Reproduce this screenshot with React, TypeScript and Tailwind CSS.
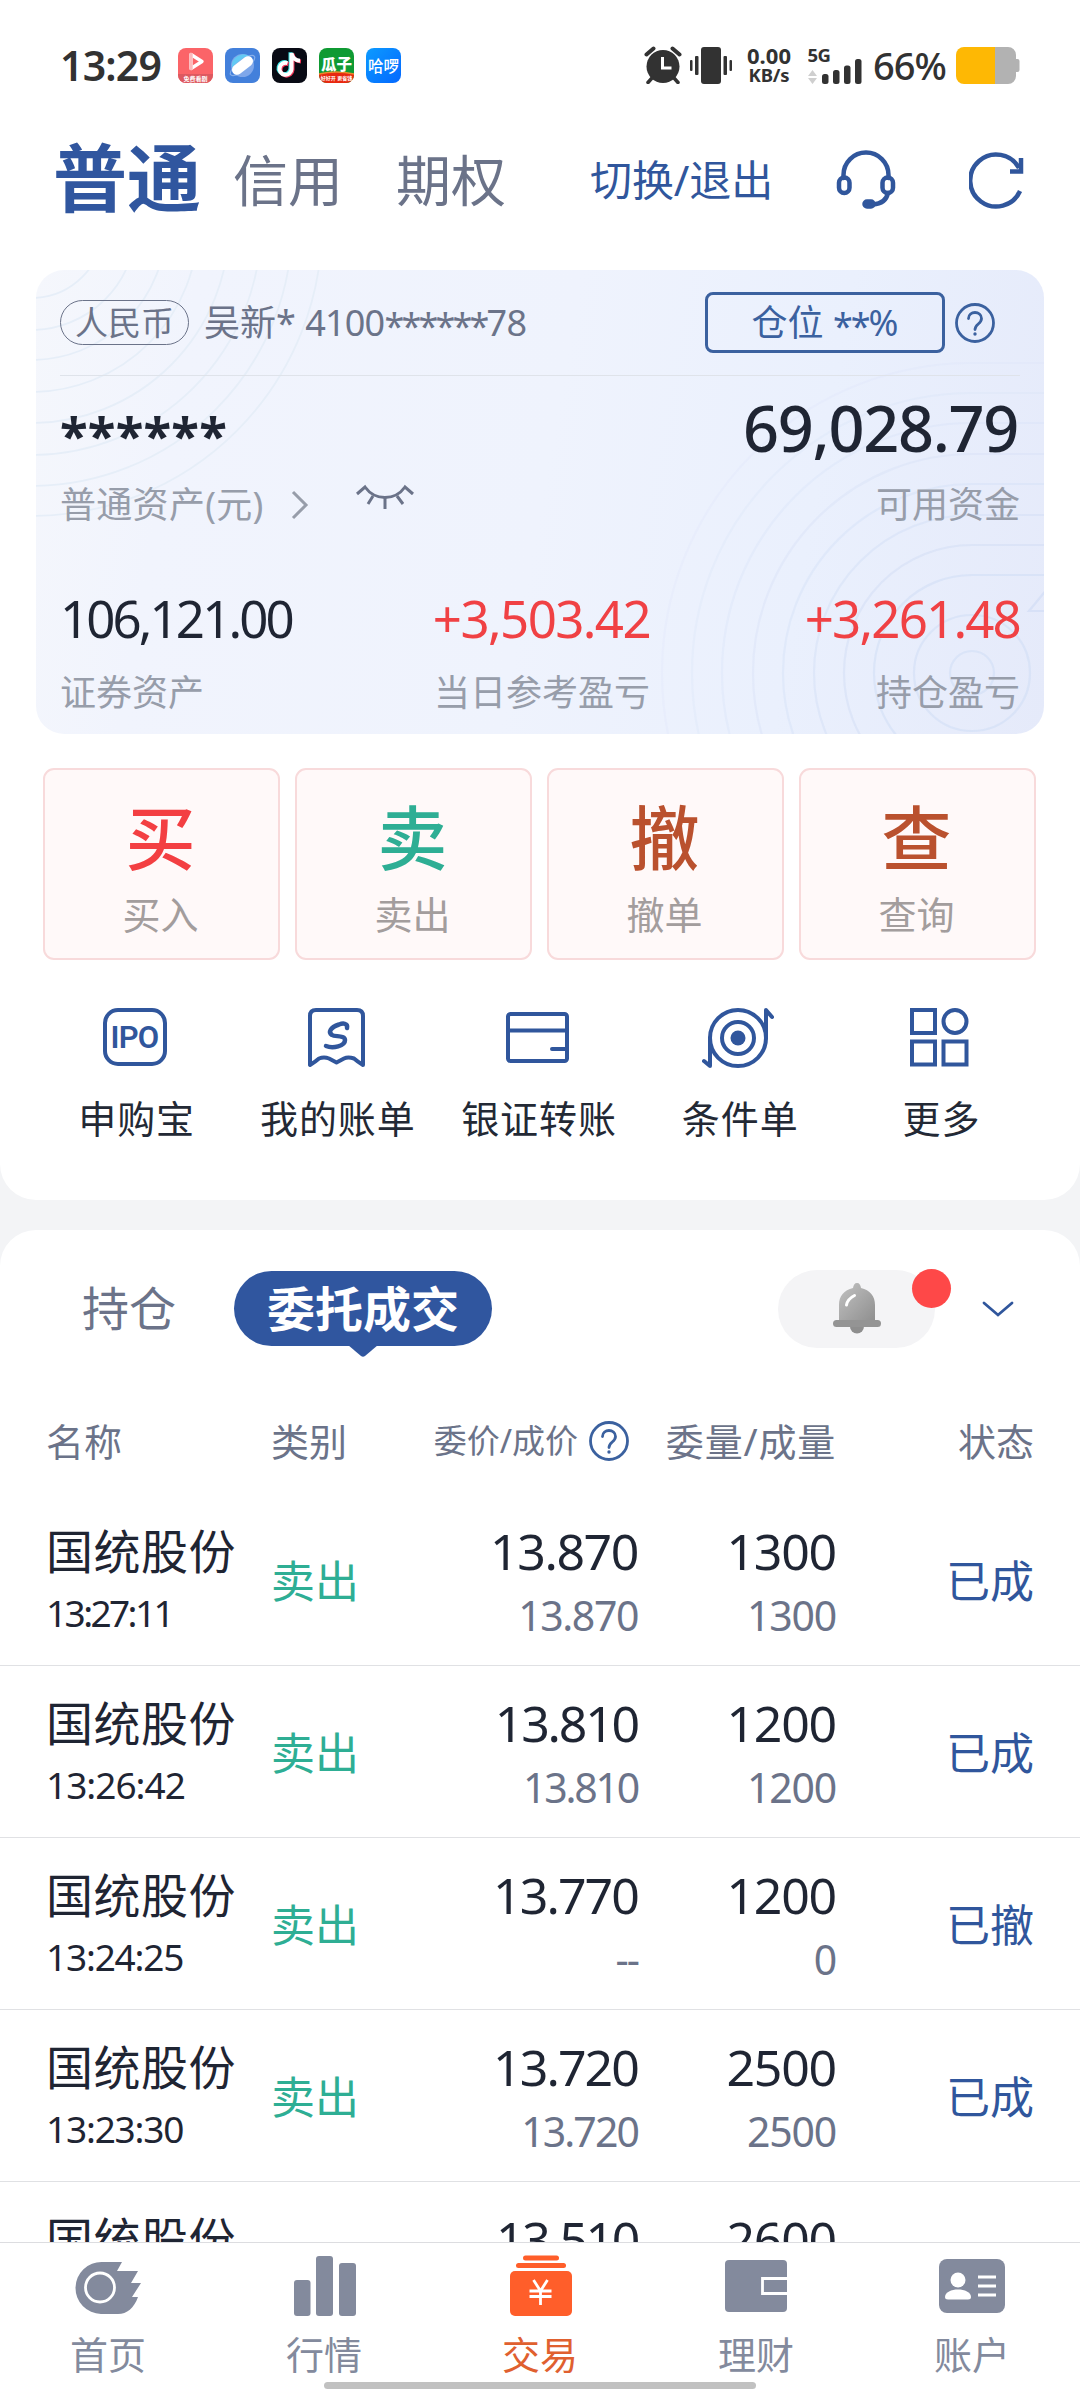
import type { ReactNode } from "react";
import clsx from "clsx";

type Order = {
  name: string;
  time: string;
  timeClass: string;
  price: string;
  dealPrice: string;
  priceClass: string;
  amount: string;
  dealAmount: string;
  status: string;
};

const orders: Order[] = [
  { name: "国统股份", time: "13:27:11", timeClass: "tracking-[-2.6px]", price: "13.870", dealPrice: "13.870", priceClass: "tracking-[-1.4px]", amount: "1300", dealAmount: "1300", status: "已成" },
  { name: "国统股份", time: "13:26:42", timeClass: "tracking-[-1px]", price: "13.810", dealPrice: "13.810", priceClass: "tracking-[-2.2px]", amount: "1200", dealAmount: "1200", status: "已成" },
  { name: "国统股份", time: "13:24:25", timeClass: "tracking-[-1.2px]", price: "13.770", dealPrice: "--", priceClass: "tracking-[-1.9px]", amount: "1200", dealAmount: "0", status: "已撤" },
  { name: "国统股份", time: "13:23:30", timeClass: "tracking-[-1.2px]", price: "13.720", dealPrice: "13.720", priceClass: "tracking-[-1.9px]", amount: "2500", dealAmount: "2500", status: "已成" },
  { name: "国统股份", time: "13:22:08", timeClass: "tracking-[-1.2px]", price: "13.510", dealPrice: "13.510", priceClass: "tracking-[-2.4px]", amount: "2600", dealAmount: "2600", status: "已成" },
];

const actions = [
  { big: "买", label: "买入", color: "text-[#f33f42]" },
  { big: "卖", label: "卖出", color: "text-[#2eae94]" },
  { big: "撤", label: "撤单", color: "text-[#ba512e]" },
  { big: "查", label: "查询", color: "text-[#ba512e]" },
];

/* ---------- status bar ---------- */

const AppBadges = () => (
  <div className="ml-[17px] flex gap-[12px]">
    <svg width="35" height="35" viewBox="0 0 35 35">
      <rect width="35" height="35" rx="8" fill="#fb6468" />
      <path d="M0 26h35v1a8 8 0 0 1-8 8H8a8 8 0 0 1-8-8z" fill="#dd5960" />
      <path d="M13 6.5v14l11-7z" fill="none" stroke="#fff" strokeWidth="3.4" strokeLinejoin="round" />
      <path d="M13 6.5v14" stroke="#fdb9bb" strokeWidth="3.4" strokeLinecap="round" />
      <text x="17.5" y="32.5" fontSize="6" fontWeight="700" textAnchor="middle" fill="#fff">免费看剧</text>
    </svg>
    <svg width="35" height="35" viewBox="0 0 35 35">
      <rect width="35" height="35" rx="8" fill="#4380db" />
      <circle cx="17.500" cy="17.500" r="11.500" fill="#7fa7ea" />
      <path d="M7 20A11.500 11.500 0 0 1 26 9.500z" fill="#63c9f3" />
      <ellipse cx="17.500" cy="17.500" rx="15" ry="5" transform="rotate(-38 17.500 17.500)" fill="none" stroke="#86aeea" strokeWidth="1.200" />
      <rect x="5.500" y="12.500" width="24" height="10" rx="5" transform="rotate(-38 17.500 17.500)" fill="#fff" />
    </svg>
    <svg width="35" height="35" viewBox="0 0 35 35">
      <rect width="35" height="35" rx="8" fill="#080a14" />
      <g fill="none" strokeWidth="4">
        <path d="M15.500 15.200a6 6 0 1 0 4 6V5" stroke="#3be4e4" transform="translate(-1 -.8)" />
        <path d="M15.500 15.200a6 6 0 1 0 4 6V5c.6 4.500 4 7.500 8.500 7.800" stroke="#f2385a" transform="translate(1 .8)" />
        <path d="M15.500 15.200a6 6 0 1 0 4 6V5c.6 4.500 4 7.500 8.500 7.800" stroke="#fff" />
      </g>
    </svg>
    <svg width="35" height="35" viewBox="0 0 35 35">
      <rect width="35" height="35" rx="8" fill="#0f9a33" />
      <path d="M0 26q17-4 35 0v1a8 8 0 0 1-8 8H8a8 8 0 0 1-8-8z" fill="#e8280f" />
      <path d="M0 26q17-4 35 0" fill="none" stroke="#e98a2c" strokeWidth="1.500" />
      <text x="17.500" y="21.500" fontSize="15.500" fontWeight="900" textAnchor="middle" fill="#fff">瓜子</text>
      <text x="17.500" y="32" fontSize="5" fontWeight="700" textAnchor="middle" fill="#fff">好好开 更省钱</text>
    </svg>
    <svg width="35" height="35" viewBox="0 0 35 35">
      <defs>
        <linearGradient id="hello" x1="0" y1="0" x2="1" y2="1">
          <stop offset="0" stopColor="#0c9bff" />
          <stop offset="1" stopColor="#0468ff" />
        </linearGradient>
      </defs>
      <rect width="35" height="35" rx="8" fill="url(#hello)" />
      <text x="17.500" y="23.500" fontSize="15.500" fontWeight="500" textAnchor="middle" fill="#fff">哈啰</text>
    </svg>
  </div>
);

const AlarmIcon = () => (
  <svg width="38" height="38" viewBox="0 0 38 38" fill="none" stroke="#323232" strokeWidth="3.500">
    <circle cx="19" cy="20.500" r="16.500" fill="#323232" stroke="none" />
    <path d="M2.500 8.500l7-6M28.500 2.500l7 6" strokeWidth="4" strokeLinecap="round" />
    <path d="M8 32l-4 4.500M30 32l4 4.500" strokeLinecap="round" />
    <path d="M18.500 11v11h9" stroke="#fff" strokeWidth="3" />
  </svg>
);

const VibrateIcon = () => (
  <svg width="42" height="37" viewBox="0 0 42 37" fill="#323232">
    <rect x="11" y="0" width="20" height="37" rx="3" />
    <rect x="0" y="13" width="2.500" height="11" rx="1" />
    <rect x="5" y="9" width="3.500" height="19" rx="1" />
    <rect x="33.500" y="9" width="3.500" height="19" rx="1" />
    <rect x="39.500" y="13" width="2.500" height="11" rx="1" />
  </svg>
);

const SignalIcon = () => (
  <svg width="54" height="37" viewBox="0 0 54 37" fill="#323232">
    <text x="-0.500" y="14.500" fontSize="18.500" fontWeight="700" letterSpacing="-0.500">5G</text>
    <path d="M4.500 23l4.500 6H0zM4.500 37L0 31h9z" fill="#cfcfcf" />
    <rect x="14" y="27" width="6.500" height="10" rx="2.500" />
    <rect x="25" y="23" width="6.500" height="14" rx="2.500" />
    <rect x="36" y="18.500" width="6.500" height="18.500" rx="2.500" />
    <rect x="47" y="12" width="6.500" height="25" rx="2.500" />
  </svg>
);

const BatteryIcon = () => (
  <svg width="64" height="37" viewBox="0 0 64 37">
    <path d="M8 0h44a8 8 0 0 1 8 8v4h1.500a2 2 0 0 1 2 2v9a2 2 0 0 1-2 2H60v4a8 8 0 0 1-8 8H39V0z" fill="#b2b2b2" />
    <path d="M8 0h31v37H8a8 8 0 0 1-8-8V8a8 8 0 0 1 8-8z" fill="#feb804" />
  </svg>
);

const StatusBar = () => (
  <div className="flex h-[130px] items-center pr-[60px] pl-[60px] text-[#323232]">
    <span className="w-[101px] text-[41px] leading-none font-semibold tracking-[-0.8px] whitespace-nowrap">13:29</span>
    <AppBadges />
    <div className="flex-1" />
    <AlarmIcon />
    <div className="ml-[8px]"><VibrateIcon /></div>
    <div className="ml-[13px] w-[48px] text-center font-bold">
      <div className="text-[22px] leading-[19px]">0.00</div>
      <div className="text-[18.5px] leading-[20px] tracking-[-0.2px]">KB/s</div>
    </div>
    <div className="ml-[15px]"><SignalIcon /></div>
    <span className="ml-[11px] w-[76px] text-[38px] leading-none font-medium tracking-[-1px] whitespace-nowrap">66%</span>
    <div className="ml-[7px]"><BatteryIcon /></div>
  </div>
);

/* ---------- account header ---------- */

const HeadsetIcon = () => (
  <svg width="60" height="60" viewBox="0 0 60 60" fill="none" stroke="#30569c" strokeWidth="4.500" strokeLinecap="round">
    <path d="M7.500 28V25a22.500 22.500 0 0 1 45 0v3" />
    <rect x="3" y="27.500" width="10.500" height="15.500" rx="5.250" />
    <rect x="46.500" y="27.500" width="10.500" height="15.500" rx="5.250" />
    <path d="M52 43c-1.500 7-7 11-15 11.500" />
    <rect x="28.500" y="51.500" width="9" height="5" rx="2.500" fill="#30569c" />
  </svg>
);

const RefreshIcon = () => (
  <svg width="56" height="58" viewBox="0 0 56 58" fill="none" stroke="#30569c" strokeWidth="4.500">
    <path d="M51 40A26 26 0 1 1 50 17" />
    <path d="M52 7v13.500H41" />
  </svg>
);

const Header = () => (
  <div className="flex h-[100px] items-center pl-[53px]">
    <span className="mb-[4px] text-[74px] leading-none font-bold text-[#30569f]">普通</span>
    <span className="mb-[2px] ml-[32px] text-[55px] leading-none text-[#6b7389]">信用</span>
    <span className="mb-[2px] ml-[53px] text-[55px] leading-none text-[#6b7389]">期权</span>
    <span className="ml-[84px] w-[186px] text-[42px] leading-none tracking-[-0.1px] whitespace-nowrap text-[#30569c]">切换/退出</span>
    <div className="ml-[60px]"><HeadsetIcon /></div>
    <div className="ml-[73px]"><RefreshIcon /></div>
  </div>
);

/* ---------- asset card ---------- */

const HelpIcon = ({ size = 40 }: { size?: number }) => (
  <svg width={size} height={size} viewBox="0 0 40 40" fill="none" stroke="#3b619f" strokeWidth="2.800">
    <circle cx="20" cy="20" r="18.500" />
    <path d="M13.500 15.500c0-8 13-8 13 0 0 5.500-6.500 5.500-6.500 11" strokeLinecap="round" />
    <circle cx="20" cy="31" r="1.700" fill="#3b619f" stroke="none" />
  </svg>
);

const leftRings = [73, 105, 135, 167, 198, 230, 261, 291];
const rightRings = [98, 128, 158, 189, 219, 250, 280, 310];

const CardRings = () => (
  <svg className="absolute inset-0" width="1008" height="464" viewBox="0 0 1008 464" fill="none">
    <g stroke="#e6eef8" strokeWidth="1.800">
      {leftRings.map((r) => (
        <circle key={r} cx="-5" cy="-45" r={r} />
      ))}
    </g>
    <g stroke="#c9d8f3" strokeWidth="2.200">
      {rightRings.map((r, i) => (
        <path
          key={r}
          opacity={0.42 - i * 0.043}
          d={`M1008 ${403 - r}H936A${r} ${r} 0 0 0 ${936 - r} 403A${r} ${r} 0 0 0 936 ${403 + r}`}
        />
      ))}
      <circle cx="936" cy="403" r="22" opacity="0.42" />
      <circle cx="936" cy="403" r="58" opacity="0.42" />
      <path d="M1012 318l-19 23h19" opacity="0.5" />
    </g>
  </svg>
);

const EyeClosedIcon = () => (
  <svg width="60" height="28" viewBox="0 0 60 28" fill="none" stroke="#6b7389" strokeWidth="3">
    <path d="M2 10l8-7c10 14 30 14 40 0l8 7" />
    <path d="M18 12l-5 8M30 14v11M42 12l6 8" />
  </svg>
);

const Metric = ({ value, label, className }: { value: string; label: string; className?: string }) => (
  <div className={clsx("flex flex-col", className)}>
    <span className="text-[51px] leading-[60px]">{value}</span>
    <span className="mt-[25px] text-[36px] leading-[40px] tracking-normal text-[#979daa]">{label}</span>
  </div>
);

const AssetCard = () => (
  <div className="relative mx-9 h-[464px] overflow-hidden rounded-[28px] bg-linear-[100deg,#f5f7fc_0%,#f1f4fd_15%,#eff3fd_50%,#eaf0fd_75%,#e5eafa_100%] px-6 text-[#1f2533]">
    <CardRings />
    <div className="relative flex h-[106px] items-center border-b border-[#dfe3ea] text-[#6b7389]">
      <span className="flex h-[45px] w-[129px] items-center justify-center rounded-full border-[1.5px] border-[#6b7389] text-[33px] leading-none">
        人民币
      </span>
      <span className="ml-[15px] text-[36px] leading-none whitespace-nowrap">
        吴新* <span className="tracking-[-0.8px]">4100<span className="relative top-[3px] tracking-[-2.8px]">******</span>78</span>
      </span>
      <div className="flex-1" />
      <span className="flex h-[61px] w-[240px] items-center justify-center rounded-lg border-[3px] border-[#3b619f] text-[36px] leading-none text-[#3b619f]">
        仓位&nbsp;<span className="relative top-[3px] tracking-[-2px]">**</span>%
      </span>
      <div className="mr-[25px] ml-[10px]"><HelpIcon /></div>
    </div>

    <div className="relative flex justify-between">
      <div>
        <div className="relative top-[4px] h-[88px] text-[51px] leading-[108px] font-bold tracking-[0.2px]">******</div>
        <div className="mt-[21px] flex h-[40px] items-center text-[36px] leading-none tracking-[0.3px] text-[#979daa]">
          普通资产(元)
          <svg className="ml-[27px]" width="18" height="30" viewBox="0 0 18 30" fill="none" stroke="#979daa" strokeWidth="3">
            <path d="M2 2l13 13L2 28" />
          </svg>
          <div className="mb-[14px] ml-[46px]"><EyeClosedIcon /></div>
        </div>
      </div>
      <div className="text-right">
        <div className="mt-[8px] -mr-px h-[88px] pr-[3px] text-[63px] leading-[88px] font-medium tracking-[-1.3px]">69,028.79</div>
        <div className="mt-[13px] text-[36px] leading-[40px] text-[#979daa]">可用资金</div>
      </div>
    </div>

    <div className="relative mt-[63px] grid grid-cols-[300px_290px_1fr] text-[#f04144]">
      <Metric value="106,121.00" label="证券资产" className="tracking-[-2.9px] text-[#1f2533]" />
      <Metric value="+3,503.42" label="当日参考盈亏" className="items-end tracking-[-1.6px]" />
      <Metric value="+3,261.48" label="持仓盈亏" className="items-end tracking-[-1.8px]" />
    </div>
  </div>
);

/* ---------- shortcuts ---------- */

const ActionButtons = () => (
  <div className="mt-[34px] grid grid-cols-4 gap-[15px] pr-[44px] pl-[43px]">
    {actions.map((item) => (
      <button key={item.big} className="flex h-[192px] flex-col items-center rounded-[11px] border-2 border-[#f8dadb] bg-[#fff9f9] pr-[2px]">
        <span className={clsx("mt-[32px] text-[70px] leading-[72px] font-medium", item.color)}>{item.big}</span>
        <span className="mt-[18px] text-[38px] leading-[44px] text-[#a39d9d]">{item.label}</span>
      </button>
    ))}
  </div>
);

const IconBox = ({ children, width = 72 }: { children: ReactNode; width?: number }) => (
  <svg className="mr-[4px]" width={width} height="62" viewBox={`0 0 ${width} 62`} fill="none" stroke="#30569c" strokeWidth="4">
    {children}
  </svg>
);

const shortcuts = [
  {
    label: "申购宝",
    icon: (
      <IconBox>
        <rect x="6" y="3" width="60" height="54" rx="13" />
        <text x="35.500" y="40.500" fontFamily="Roboto" fontSize="31" fontWeight="600" textAnchor="middle" letterSpacing="-0.800" fill="#30569c" stroke="none">IPO</text>
      </IconBox>
    ),
  },
  {
    label: "我的账单",
    icon: (
      <IconBox>
        <path d="M10 58V9q0-6 6-6h41q6 0 6 6v49q-5-3-9-6.500-6-2-10 0l-7.500 4-7.500-4q-5-2-10 0-4 3.500-9 6.500z" strokeLinejoin="round" />
        <path d="M47 21c1-5-4-5-8-3.500-9 3-11 8-7 10.500 3 2 13 0 13 5 0 6-12 9-19 6" strokeWidth="4.500" strokeLinecap="round" />
      </IconBox>
    ),
  },
  {
    label: "银证转账",
    icon: (
      <IconBox>
        <rect x="7" y="7" width="59" height="47" rx="2.500" />
        <path d="M7 23.500h59M66 42H51" strokeLinecap="round" />
      </IconBox>
    ),
  },
  {
    label: "条件单",
    icon: (
      <IconBox>
        <circle cx="36" cy="31" r="28" />
        <circle cx="36" cy="31" r="16" />
        <circle cx="36" cy="31" r="7.500" fill="#30569c" stroke="none" />
        <path d="M64 31V3l6 7M8 31v28l-6-5" strokeLinecap="round" strokeLinejoin="round" />
      </IconBox>
    ),
  },
  {
    label: "更多",
    icon: (
      <IconBox>
        <rect x="9" y="3" width="23" height="23" />
        <circle cx="52" cy="14.500" r="11.500" />
        <rect x="9" y="34.500" width="23" height="23" />
        <rect x="40.500" y="34.500" width="23" height="23" />
      </IconBox>
    ),
  },
];

const Shortcuts = () => (
  <div className="mt-[47px] grid grid-cols-5 pr-[38px] pl-[36px]">
    {shortcuts.map((item) => (
      <div key={item.label} className="flex flex-col items-center">
        {item.icon}
        <span className="mt-[27px] text-[38px] leading-[44px] tracking-[0.9px] text-[#232935]">{item.label}</span>
      </div>
    ))}
  </div>
);

/* ---------- orders ---------- */

const BellIcon = () => (
  <svg width="48" height="52" viewBox="0 0 48 52">
    <defs>
      <linearGradient id="bell" x1="0" y1="0" x2="1" y2="1">
        <stop offset="0" stopColor="#c2c2c2" />
        <stop offset="1" stopColor="#8f8f8f" />
      </linearGradient>
    </defs>
    <circle cx="24" cy="43.500" r="7" fill="#8e8e8e" />
    <path d="M24 0c2.500 0 3.500 2 4 5 9 2 14 8 14 17v16H6V22C6 13 11 7 20 5c.5-3 1.500-5 4-5z" fill="url(#bell)" />
    <rect x="0" y="37" width="48" height="7" rx="3.500" fill="#949494" />
    <path d="M13.500 22q1-6 8-9.500" stroke="#fff" strokeWidth="3" strokeLinecap="round" fill="none" />
  </svg>
);

const OrderTabs = () => (
  <div className="flex h-[157px] items-center pl-[82px]">
    <span className="w-[95px] text-[47px] leading-none text-[#6b7389]">持仓</span>
    <div className="relative ml-[57px] flex h-[75px] w-[258px] items-center justify-center rounded-full bg-[#30569f] text-[48px] leading-none font-bold text-white">
      委托成交
      <svg className="absolute top-[74px] left-[114px]" width="30" height="12" viewBox="0 0 30 12">
        <path d="M0 0h30L17 11q-2 1.500-4 0z" fill="#30569f" />
      </svg>
    </div>
    <div className="relative ml-[286px] flex h-[78px] w-[157px] items-center justify-center rounded-full bg-[#f4f4f6]">
      <BellIcon />
      <span className="absolute -top-px -right-[16px] size-[39px] rounded-full bg-[#fe4848]" />
    </div>
    <svg className="ml-[47px]" width="32" height="18" viewBox="0 0 32 18" fill="none" stroke="#30569c" strokeWidth="2.800" strokeLinecap="round">
      <path d="M2 3l14 12L30 3" />
    </svg>
  </div>
);

const columns = "grid grid-cols-[225px_162px_205px_198px_198px] px-[46px]";

const OrderTable = () => (
  <div>
    <div className={clsx(columns, "h-[107px] items-center text-[38px] leading-none text-[#6b7389]")}>
      <span>名称</span>
      <span>类别</span>
      <span className="flex items-center justify-end whitespace-nowrap">
        <span className="text-[33px]">委价/成价</span>
        <span className="mr-[9px] ml-[11px]"><HelpIcon /></span>
      </span>
      <span className="text-right tracking-[0.8px]">委量/成量</span>
      <span className="text-right">状态</span>
    </div>
    {orders.map((order) => (
      <div key={order.time} className={clsx(columns, "h-[172px] items-center border-b border-[#e0e1e4] leading-none text-[#1f2533]")}>
        <div className="pt-[7px]">
          <div className="text-[47px] leading-[60px] tracking-[0.5px]">{order.name}</div>
          <div className={clsx("text-[37px] leading-[64px]", order.timeClass)}>{order.time}</div>
        </div>
        <span className="mt-[3px] text-[44px] text-[#2eae94]">卖出</span>
        <div className={clsx("pt-[7px] text-right", order.priceClass)}>
          <div className="text-[50px] leading-[64px]">{order.price}</div>
          <div className="text-[41px] leading-[64px] text-[#6b7389]">{order.dealPrice}</div>
        </div>
        <div className="pt-[7px] text-right tracking-[-1.2px]">
          <div className="text-[50px] leading-[64px]">{order.amount}</div>
          <div className="text-[41px] leading-[64px] text-[#6b7389]">{order.dealAmount}</div>
        </div>
        <span className="mt-[3px] text-right text-[44px] text-[#30569c]">{order.status}</span>
      </div>
    ))}
  </div>
);

/* ---------- bottom navigation ---------- */

const NavIcon = ({ children }: { children: ReactNode }) => (
  <svg width="66" height="62" viewBox="0 0 66 62" fill="#838a9d">
    {children}
  </svg>
);

const navItems = [
  {
    label: "首页",
    icon: (
      <NavIcon>
        <path d="M27 7h20l-5 9h21l-7 12h10l-9 14h6c-4 11-11 17-20 17H26A26 26 0 0 1 27 7z" />
        <circle cx="25" cy="32.500" r="14.500" fill="none" stroke="#fff" strokeWidth="2.800" />
      </NavIcon>
    ),
  },
  {
    label: "行情",
    icon: (
      <NavIcon>
        <rect x="3" y="25" width="16.500" height="36" rx="3" />
        <rect x="25" y="1" width="17" height="60" rx="3" />
        <rect x="48" y="8" width="17" height="53" rx="3" />
      </NavIcon>
    ),
  },
  {
    label: "交易",
    active: true,
    icon: (
      <NavIcon>
        <g fill="#ff5e2a">
          <rect x="16" y="0.500" width="36" height="5" rx="2.500" />
          <rect x="9" y="8" width="50" height="5" rx="2.500" />
          <rect x="3" y="16" width="62" height="45" rx="5" />
        </g>
        <path d="M26.500 25l7 11 7-11M33.500 36v14M22.500 36h22M22.500 41.500h22" fill="none" stroke="#fff" strokeWidth="2.800" />
      </NavIcon>
    ),
  },
  {
    label: "理财",
    icon: (
      <NavIcon>
        <rect x="2" y="5" width="62" height="52" rx="4" />
        <path d="M64 23.500H39.500v15H64" fill="none" stroke="#fff" strokeWidth="2.800" />
      </NavIcon>
    ),
  },
  {
    label: "账户",
    icon: (
      <NavIcon>
        <rect x="0" y="4" width="66" height="54" rx="8" />
        <g fill="#fff">
          <circle cx="19" cy="25" r="7.500" />
          <path d="M6 42c0-10 26-10 26 0q0 2.500-3 2.500H9q-3 0-3-2.500z" />
          <path d="M39 20.500h18v3H39zM39 29.500h18v3H39zM39 38.500h18v3H39z" />
        </g>
      </NavIcon>
    ),
  },
];

const BottomNav = () => (
  <nav className="relative h-[150px] border-t border-[#dcdde0] bg-white">
    <div className="grid grid-cols-5 pt-[12px]">
      {navItems.map((item) => (
        <div key={item.label} className="flex flex-col items-center">
          {item.icon}
          <span className={clsx("mt-[15px] text-[38px] leading-[44px]", item.active ? "text-[#e0602f]" : "text-[#838a9d]")}>
            {item.label}
          </span>
        </div>
      ))}
    </div>
    <div className="absolute bottom-[3px] left-1/2 h-[7px] w-[432px] -translate-x-1/2 rounded-full bg-[#c1c1c1]" />
  </nav>
);

const App = () => (
  <div className="flex h-[2392px] w-[1080px] flex-col overflow-hidden bg-[#f3f4f6] font-['Noto_Sans','Noto_Sans_CJK_SC',sans-serif]">
    <section className="h-[1200px] shrink-0 rounded-b-[36px] bg-white">
      <StatusBar />
      <Header />
      <div className="h-[40px]" />
      <AssetCard />
      <ActionButtons />
      <Shortcuts />
    </section>
    <section className="mt-[30px] min-h-0 flex-1 overflow-hidden rounded-t-[36px] bg-white">
      <OrderTabs />
      <OrderTable />
    </section>
    <BottomNav />
  </div>
);

export default App;
